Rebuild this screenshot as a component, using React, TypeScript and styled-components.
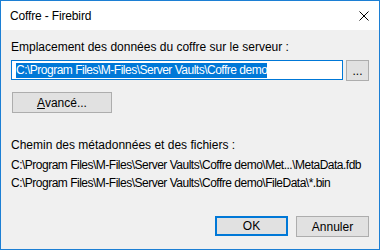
import styled, { createGlobalStyle } from 'styled-components';

const GlobalStyle = createGlobalStyle`
  html, body {
    margin: 0;
    padding: 0;
    background: #ffffff;
  }
  * {
    box-sizing: border-box;
  }
`;

const Window = styled.div`
  width: 380px;
  height: 250px;
  border: 1px solid #1c7fd4;
  display: flex;
  flex-direction: column;
  font-family: 'Liberation Sans', sans-serif;
  font-size: 12px;
  color: #000000;
  background: #f0f0f0;
`;

const TitleBar = styled.div`
  height: 29px;
  flex: none;
  background: #ffffff;
  display: flex;
  align-items: center;
  justify-content: space-between;
  padding: 0 10px 0 9px;
`;

const Title = styled.span`
  font-size: 12px;
  line-height: 16px;
  letter-spacing: -0.15px;
`;

const CloseButton = styled.button`
  border: none;
  background: transparent;
  padding: 0;
  width: 10px;
  height: 10px;
  display: flex;
`;

const Body = styled.div`
  flex: 1;
  display: flex;
  flex-direction: column;
  padding: 9px 10px 12px 10px;
`;

const Label = styled.div<{ $top?: number }>`
  line-height: 16px;
  margin-top: ${(p) => p.$top ?? 0}px;
`;

const Row = styled.div`
  display: flex;
  align-items: flex-start;
  gap: 3px;
  margin-top: 5px;
`;

const PathInput = styled.div`
  flex: 1;
  height: 20px;
  border: 1px solid #0078d7;
  background: #ffffff;
  display: flex;
  align-items: center;
  padding-left: 4px;
`;

const Selected = styled.span`
  background: #0078d7;
  color: #ffffff;
  line-height: 15px;
  white-space: nowrap;
  letter-spacing: -0.5px;
`;

const Button = styled.button<{ $default?: boolean; $width: number }>`
  width: ${(p) => p.$width}px;
  height: ${(p) => (p.$default ? 20 : 21)}px;
  background: #e1e1e1;
  border: ${(p) => (p.$default ? '2px solid #0078d7' : '1px solid #adadad')};
  font-family: inherit;
  font-size: 12px;
  color: #000000;
  padding: 0;
  display: flex;
  align-items: center;
  justify-content: center;
  flex: none;
`;

const AdvancedButton = styled(Button)`
  margin-top: 11px;
  margin-left: 1px;
`;

const PathText = styled.div`
  line-height: 18px;
  white-space: nowrap;
  letter-spacing: -0.5px;
`;

const Paths = styled.div`
  margin-top: 3px;
`;

const Footer = styled.div`
  margin-top: auto;
  display: flex;
  justify-content: flex-end;
  gap: 8px;
`;

export default function App() {
  return (
    <>
      <GlobalStyle />
      <Window>
        <TitleBar>
          <Title>Coffre - Firebird</Title>
          <CloseButton aria-label="Fermer">
            <svg width="10" height="10" viewBox="0 0 10 10">
              <path d="M0.5 0.5 L9.5 9.5 M9.5 0.5 L0.5 9.5" stroke="#000" strokeWidth="1" fill="none" />
            </svg>
          </CloseButton>
        </TitleBar>
        <Body>
          <Label>Emplacement des données du coffre sur le serveur :</Label>
          <Row>
            <PathInput>
              <Selected>C:\Program Files\M-Files\Server Vaults\Coffre demo</Selected>
            </PathInput>
            <Button $width={23}>...</Button>
          </Row>
          <AdvancedButton $width={100}>
            <span>
              <u>A</u>vancé...
            </span>
          </AdvancedButton>
          <Label $top={24}>Chemin des métadonnées et des fichiers :</Label>
          <Paths>
            <PathText>C:\Program Files\M-Files\Server Vaults\Coffre demo\Met...\MetaData.fdb</PathText>
            <PathText>C:\Program Files\M-Files\Server Vaults\Coffre demo\FileData\*.bin</PathText>
          </Paths>
          <Footer>
            <Button $default $width={73}>OK</Button>
            <Button $width={73}>Annuler</Button>
          </Footer>
        </Body>
      </Window>
    </>
  );
}
